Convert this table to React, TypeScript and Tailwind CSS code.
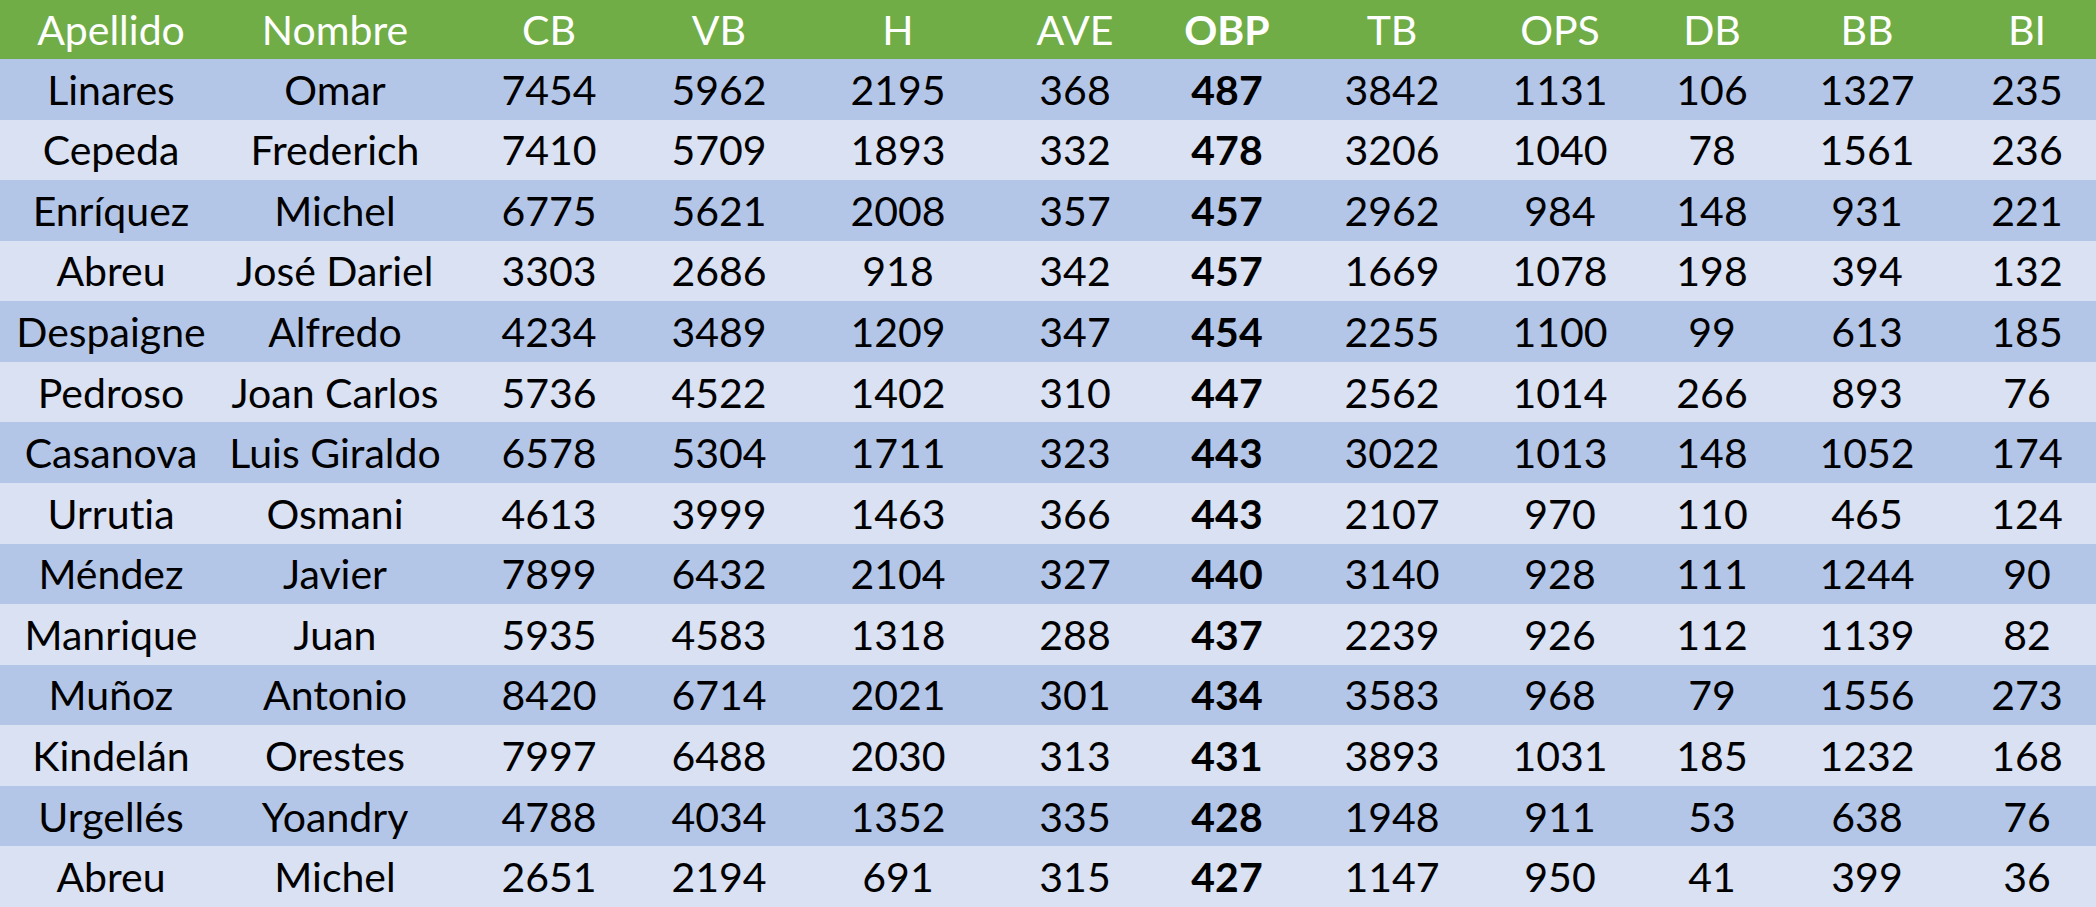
const headers = ["Apellido", "Nombre", "CB", "VB", "H", "AVE", "OBP", "TB", "OPS", "DB", "BB", "BI"];

const rows: (string | number)[][] = [
  ["Linares", "Omar", 7454, 5962, 2195, 368, 487, 3842, 1131, 106, 1327, 235],
  ["Cepeda", "Frederich", 7410, 5709, 1893, 332, 478, 3206, 1040, 78, 1561, 236],
  ["Enríquez", "Michel", 6775, 5621, 2008, 357, 457, 2962, 984, 148, 931, 221],
  ["Abreu", "José Dariel", 3303, 2686, 918, 342, 457, 1669, 1078, 198, 394, 132],
  ["Despaigne", "Alfredo", 4234, 3489, 1209, 347, 454, 2255, 1100, 99, 613, 185],
  ["Pedroso", "Joan Carlos", 5736, 4522, 1402, 310, 447, 2562, 1014, 266, 893, 76],
  ["Casanova", "Luis Giraldo", 6578, 5304, 1711, 323, 443, 3022, 1013, 148, 1052, 174],
  ["Urrutia", "Osmani", 4613, 3999, 1463, 366, 443, 2107, 970, 110, 465, 124],
  ["Méndez", "Javier", 7899, 6432, 2104, 327, 440, 3140, 928, 111, 1244, 90],
  ["Manrique", "Juan", 5935, 4583, 1318, 288, 437, 2239, 926, 112, 1139, 82],
  ["Muñoz", "Antonio", 8420, 6714, 2021, 301, 434, 3583, 968, 79, 1556, 273],
  ["Kindelán", "Orestes", 7997, 6488, 2030, 313, 431, 3893, 1031, 185, 1232, 168],
  ["Urgellés", "Yoandry", 4788, 4034, 1352, 335, 428, 1948, 911, 53, 638, 76],
  ["Abreu", "Michel", 2651, 2194, 691, 315, 427, 1147, 950, 41, 399, 36],
];

const OBP_COL = 6;

export default function App() {
  return (
    <div className="w-[2096px] h-[907px] overflow-hidden font-['Lato',sans-serif] text-[41px] leading-none [font-variant-ligatures:none]">
      <div className="grid h-full grid-cols-[222px_226px_202px_138px_220px_134px_170px_160px_176px_128px_182px_138px] grid-rows-[59px_repeat(14,minmax(0,1fr))]">
        {headers.map((h, i) => (
          <div
            key={h}
            className={`flex items-center justify-center bg-[#70ad47] text-white ${i === OBP_COL ? "font-bold" : ""}`}
          >
            {h}
          </div>
        ))}
        {rows.map((row, r) =>
          row.map((cell, c) => (
            <div
              key={`${r}-${c}`}
              className={`flex items-center justify-center text-black ${r % 2 === 0 ? "bg-[#b4c6e7]" : "bg-[#d9e1f2]"} ${c === OBP_COL ? "font-bold" : ""}`}
            >
              {cell}
            </div>
          ))
        )}
      </div>
    </div>
  );
}
